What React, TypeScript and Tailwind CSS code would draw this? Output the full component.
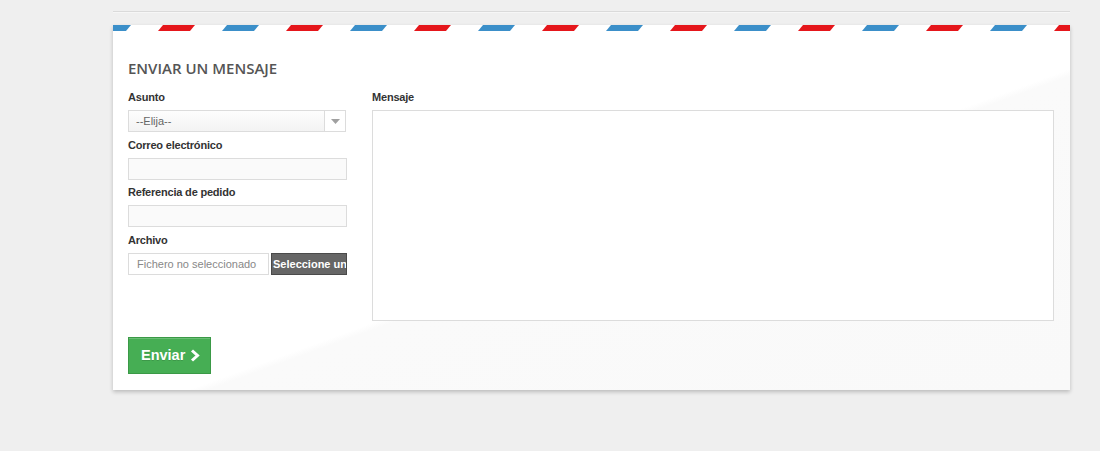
import React from "react";

function Stripes() {
  return (
    <svg className="block w-full h-[6px]" aria-hidden="true">
      <defs>
        <pattern id="airmail" patternUnits="userSpaceOnUse" width="128" height="6" x="-19" y="0">
          <polygon points="0,6 5,0 37,0 32,6" fill="#3b8fc9" />
          <polygon points="64,6 69,0 101,0 96,6" fill="#e5161b" />
        </pattern>
      </defs>
      <rect x="0" y="0" width="100%" height="6" fill="url(#airmail)" />
    </svg>
  );
}

const label = "block h-[14px] leading-[14px] text-[11px] tracking-[-0.2px] font-bold text-[#333] mb-[6px]";
const input = "block w-[219px] h-[22px] border border-[#dcdcdc] bg-[#fafafa]";

export default function App() {
  return (
    <div
      className="min-h-[451px] w-[1100px] bg-[#efefef] pl-[113px] pr-[30px] pt-[11px]"
      style={{ fontFamily: '"Liberation Sans", Arial, sans-serif' }}
    >
      <div className="h-px bg-[#dadada] border-b border-[#f6f6f6] box-content" />
      <div className="mt-[12px] bg-white shadow-[0_2px_4px_rgba(0,0,0,0.22)] bg-[linear-gradient(160deg,#ffffff_0%,#ffffff_55%,#fafafa_56%,#f9f9f9_100%)]">
        <Stripes />
        <div className="pl-[15px] pr-[16px] pt-[26px] pb-[16px]">
          <h3
            className="text-[15px] leading-[22px] text-[#555] font-semibold m-0"
            style={{ fontFamily: '"Open Sans", "Liberation Sans", sans-serif' }}
          >
            ENVIAR UN MENSAJE
          </h3>
          <div className="flex gap-[25px] mt-[11px]">
            <div className="w-[219px] shrink-0">
              <label className={label}>Asunto</label>
              <div className="flex w-[218px] h-[22px] border border-[#dcdcdc] bg-[linear-gradient(#fdfdfd,#f3f3f3)]">
                <div className="flex-1 pl-[7px] text-[11px] leading-[20px] text-[#666]">--Elija--</div>
                <div className="w-[21px] border-l border-[#dcdcdc] flex items-center justify-center bg-white">
                  <svg width="9" height="5" viewBox="0 0 9 5">
                    <polygon points="0,0 9,0 4.5,5" fill="#a0a0a0" />
                  </svg>
                </div>
              </div>

              <label className={label + " mt-[6px]"}>Correo electrónico</label>
              <div className={input} />

              <label className={label + " mt-[5px]"}>Referencia de pedido</label>
              <div className={input} />

              <label className={label + " mt-[6px]"}>Archivo</label>
              <div className="flex h-[22px]">
                <div className="w-[141px] h-[22px] border border-[#dcdcdc] bg-white pl-[8px] text-[11px] leading-[20px] text-[#888] whitespace-nowrap">
                  Fichero no seleccionado
                </div>
                <div className="ml-[2px] w-[76px] h-[22px] bg-[#666] border border-[#4a4a4a] overflow-hidden whitespace-nowrap pl-[1px] text-[11px] font-bold leading-[20px] text-white">
                  Seleccione un
                </div>
              </div>
            </div>

            <div className="flex-1">
              <label className={label}>Mensaje</label>
              <div className="h-[211px] border border-[#dcdcdc] bg-white" />
            </div>
          </div>

          <button className="mt-[16px] flex items-center gap-[5px] w-[83px] h-[37px] bg-[#46ae54] border border-[#3a9946] pl-[12px] text-white text-[14.5px] font-bold shadow-[inset_0_1px_0_rgba(255,255,255,0.2)]">
            <span className="[text-shadow:0_1px_0_rgba(0,0,0,0.15)]">Enviar</span>
            <svg width="10" height="13" viewBox="0 0 10 13">
              <polyline points="2,1.5 7.5,6.5 2,11.5" fill="none" stroke="#fff" strokeWidth="3" />
            </svg>
          </button>
        </div>
      </div>
    </div>
  );
}
